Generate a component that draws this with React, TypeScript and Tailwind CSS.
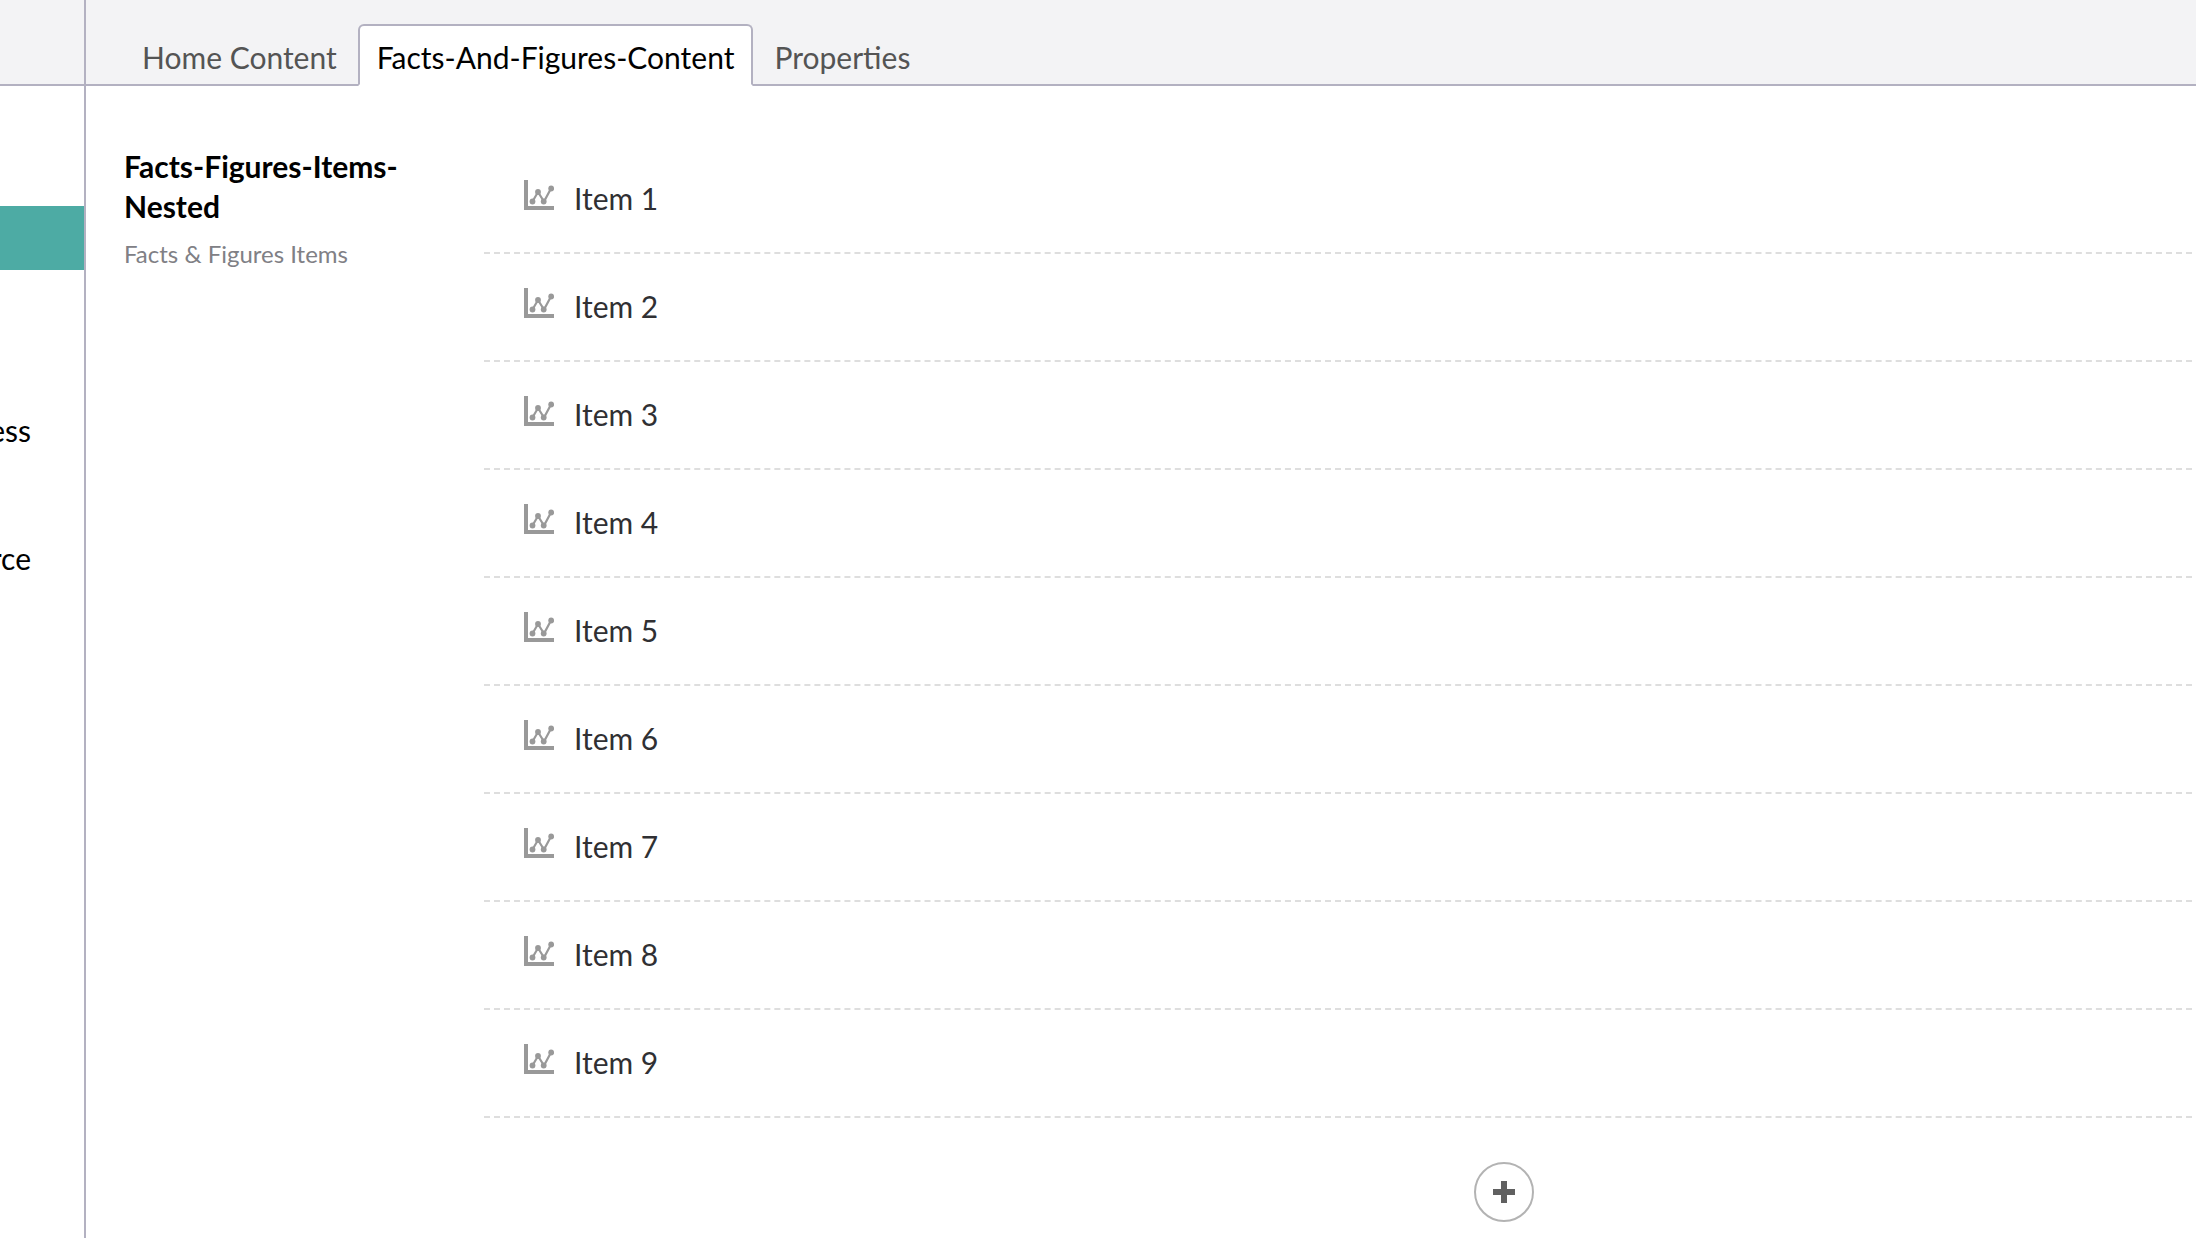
import clsx from "clsx";
import { useState } from "react";

const tabs = ["Home Content", "Facts-And-Figures-Content", "Properties"];

const treeNodes = [
  { label: "", selected: true },
  { label: "", selected: false },
  { label: "", selected: false },
  { label: "ess", selected: false },
  { label: "", selected: false },
  { label: "rce", selected: false },
];

const ChartIcon = () => (
  <svg
    width="30"
    height="30"
    viewBox="0 0 30 30"
    fill="none"
    aria-hidden="true"
    className="shrink-0 text-[#999999]"
  >
    <path d="M0 0h4v26h26v4H0z" fill="currentColor" />
    <path
      d="M8.5 21.5L14 12l6 9.5L27 8.5"
      stroke="currentColor"
      strokeWidth="2.2"
    />
    <g fill="currentColor">
      <circle cx="8.5" cy="21.5" r="2.9" />
      <circle cx="14" cy="12" r="2.9" />
      <circle cx="19.7" cy="21.5" r="2.9" />
      <circle cx="27.2" cy="8.5" r="2.9" />
    </g>
  </svg>
);

const PlusIcon = () => (
  <svg width="22" height="22" viewBox="0 0 22 22" aria-hidden="true">
    <path d="M8 0h6v8h8v6h-8v8H8v-8H0V8h8z" fill="#606060" />
  </svg>
);

function Tree() {
  return (
    <aside className="flex w-[86px] shrink-0 flex-col border-r-2 border-[#b3b1c1]">
      <div className="h-[86px] border-b-2 border-[#b3b1c1] bg-[#f3f3f5]" />
      <ul className="pt-[120px]">
        {treeNodes.map((node, index) => (
          <li
            key={index}
            className={clsx(
              "flex h-16 items-center overflow-hidden pr-[53px]",
              node.selected && "bg-[#4daba4]",
            )}
          >
            <span className="flex w-full justify-end text-black">
              {node.label}
            </span>
          </li>
        ))}
      </ul>
    </aside>
  );
}

export default function App() {
  const [active, setActive] = useState(1);
  const [items, setItems] = useState([1, 2, 3, 4, 5, 6, 7, 8, 9]);

  return (
    <div className="flex min-h-screen overflow-hidden bg-white font-['Lato',sans-serif] text-[30px] leading-9">
      <Tree />

      <div className="flex min-w-0 flex-1 flex-col">
        <nav className="flex h-[86px] items-end bg-[#f3f3f5]">
          <div className="h-[62px] w-[35px] border-b-2 border-[#b3b1c1]" />
          {tabs.map((tab, index) => (
            <button
              key={tab}
              type="button"
              onClick={() => setActive(index)}
              className={clsx(
                "h-[62px] shrink-0",
                index === active
                  ? "rounded-t-md border-2 border-[#b3b1c1] border-b-white bg-white px-[17px] pt-1 text-black"
                  : "border-b-2 border-[#b3b1c1] px-[21px] pt-1.5 text-[#545454]",
              )}
            >
              {tab}
            </button>
          ))}
          <div className="h-[62px] flex-1 border-b-2 border-[#b3b1c1]" />
        </nav>

        <main className="flex pt-[60px] pr-1 pl-[38px]">
          <div className="w-[360px] shrink-0">
            <h2 className="w-[300px] leading-10 font-bold text-black">
              Facts-Figures-Items-Nested
            </h2>
            <p className="mt-3 text-[24px] leading-8 text-[#808085]">
              Facts &amp; Figures Items
            </p>
          </div>

          <div className="min-w-0 flex-1">
            <ul>
              {items.map((item) => (
                <li
                  key={item}
                  className="flex h-[108px] items-center gap-5 border-b-2 border-dashed border-[#dedede] pl-10 text-[#303033]"
                >
                  <div className="pb-2">
                    <ChartIcon />
                  </div>
                  <span className="pb-0.5">Item {item}</span>
                </li>
              ))}
            </ul>
            <div className="flex justify-center pt-11 pl-[332px]">
              <button
                type="button"
                aria-label="Add item"
                onClick={() => setItems([...items, items.length + 1])}
                className="flex size-[60px] items-center justify-center rounded-full border-2 border-[#b3b3b3] bg-white"
              >
                <PlusIcon />
              </button>
            </div>
          </div>
        </main>
      </div>
    </div>
  );
}
